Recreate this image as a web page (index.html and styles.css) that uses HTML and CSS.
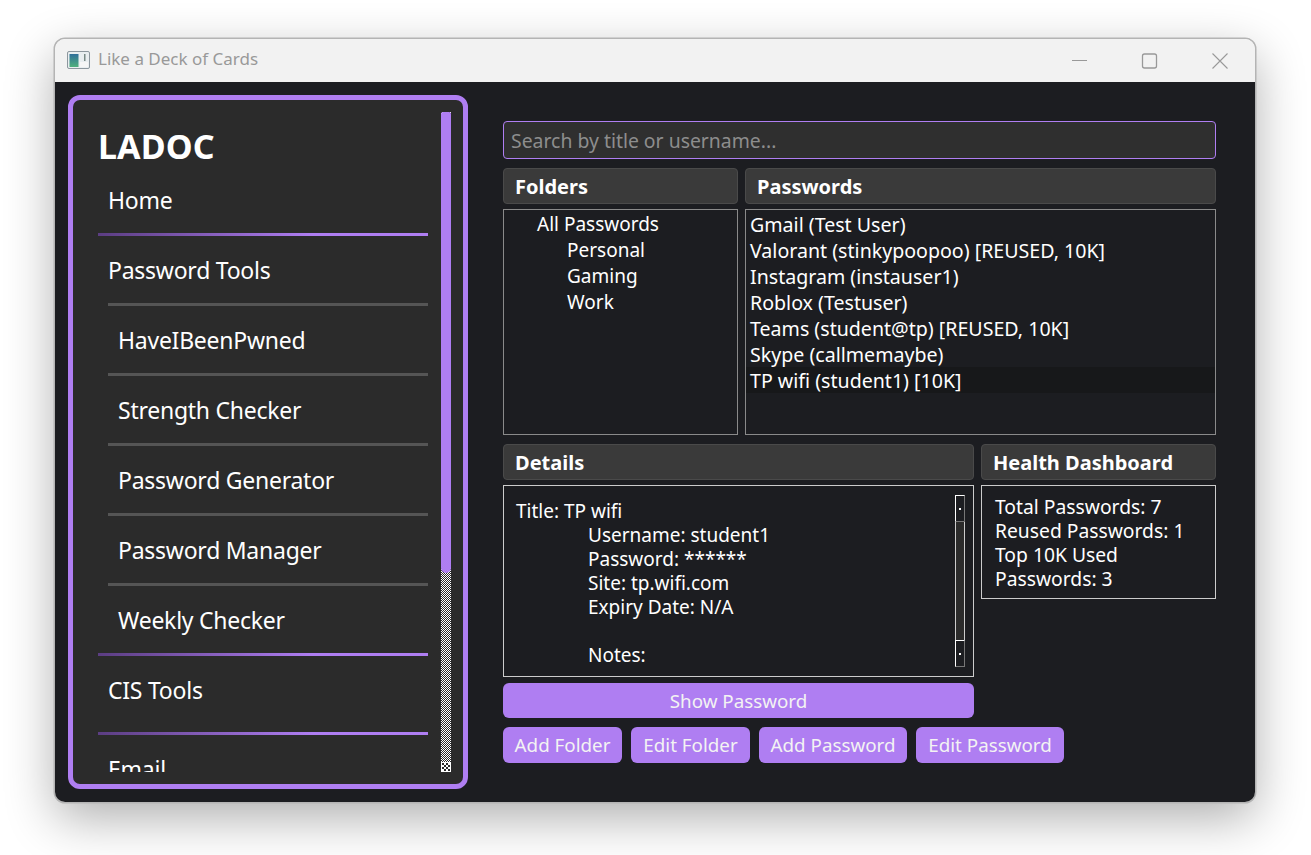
FILE: index.html
```html
<html>
  <head>
    <meta charset="utf-8" />
    <title>Like a Deck of Cards</title>
    <link rel="stylesheet" href="styles.css">
  </head>
  <body>
    <div class="window">
      <div class="titlebar">
        <svg class="app_icon" width="24" height="20" viewBox="0 0 24 20">
          <defs>
            <linearGradient id="icon_fill" x1="0" y1="0" x2="0" y2="1">
              <stop offset="0" stop-color="#2f6f9a" />
              <stop offset="1" stop-color="#4fb07c" />
            </linearGradient>
          </defs>
          <rect x="0.5" y="0.5" width="22" height="17" rx="1.5" fill="#e9eef0" stroke="#8d979e" />
          <rect x="2.5" y="3" width="9" height="13" fill="url(#icon_fill)" />
          <rect x="17" y="3" width="1.5" height="7" fill="#7a8a86" />
          <rect x="13" y="11" width="8" height="5" fill="#f6f6f6" />
        </svg>
        <span class="window_title">Like a Deck of Cards</span>
        <div class="window_controls">
          <svg width="70" height="20" viewBox="0 0 70 20"><path d="M27 9.5h15" stroke="#999" fill="none" /></svg>
          <svg width="70" height="20" viewBox="0 0 70 20"><rect x="27.5" y="3" width="14" height="14" rx="2" stroke="#999" fill="none" stroke-width="1.3" /></svg>
          <svg width="70" height="20" viewBox="0 0 70 20"><path d="M27.5 2.5l15 15M42.5 2.5l-15 15" stroke="#999" fill="none" stroke-width="1.1" /></svg>
        </div>
      </div>
      <div class="content">
        <div class="sidebar">
          <div class="nav">
            <div class="logo">LADOC</div>
            <div class="nav_item main_item">Home</div>
            <div class="nav_item tool_head">Password Tools</div>
            <div class="nav_item tool_item">HaveIBeenPwned</div>
            <div class="nav_item tool_item">Strength Checker</div>
            <div class="nav_item tool_item">Password Generator</div>
            <div class="nav_item tool_item">Password Manager</div>
            <div class="nav_item main_item weekly">Weekly Checker</div>
            <div class="nav_item main_item cis">CIS Tools</div>
            <div class="nav_item main_item">Email</div>
          </div>
          <div class="side_scrollbar">
            <div class="side_thumb"></div>
            <div class="side_arrow"></div>
          </div>
        </div>
        <div class="main">
          <div class="search">Search by title or username...</div>
          <div class="top_grid">
            <div class="section_head">Folders</div>
            <div class="section_head">Passwords</div>
            <div class="list folders">
              <div class="folder_root">All Passwords</div>
              <div class="folder_sub">Personal</div>
              <div class="folder_sub">Gaming</div>
              <div class="folder_sub">Work</div>
            </div>
            <div class="list passwords">
              <div class="pw_row">Gmail (Test User)</div>
              <div class="pw_row">Valorant (stinkypoopoo) [REUSED, 10K]</div>
              <div class="pw_row">Instagram (instauser1)</div>
              <div class="pw_row">Roblox (Testuser)</div>
              <div class="pw_row">Teams (student@tp) [REUSED, 10K]</div>
              <div class="pw_row">Skype (callmemaybe)</div>
              <div class="pw_row selected">TP wifi (student1) [10K]</div>
            </div>
          </div>
          <div class="bottom_grid">
            <div class="section_head">Details</div>
            <div class="section_head">Health Dashboard</div>
            <div class="details">
              <div class="details_text">
                <div>Title: TP wifi</div>
                <div class="indent">Username: student1</div>
                <div class="indent">Password: ******</div>
                <div class="indent">Site: tp.wifi.com</div>
                <div class="indent">Expiry Date: N/A</div>
                <div class="indent blank"></div>
                <div class="indent">Notes:</div>
              </div>
              <div class="detail_scrollbar">
                <div class="arrow_btn"><span class="arrow_dot"></span></div>
                <div class="detail_track"></div>
                <div class="arrow_btn"><span class="arrow_dot"></span></div>
              </div>
            </div>
            <div class="health">
              Total Passwords: 7<br>
              Reused Passwords: 1<br>
              Top 10K Used<br>
              Passwords: 3
            </div>
            <button class="btn show_btn">Show Password</button>
          </div>
          <div class="actions">
            <button class="btn folder_btn">Add Folder</button>
            <button class="btn folder_btn">Edit Folder</button>
            <button class="btn password_btn">Add Password</button>
            <button class="btn password_btn">Edit Password</button>
          </div>
        </div>
      </div>
    </div>
  </body>
</html>
```

FILE: styles.css
```css
body {
  margin: 0;
  background: #fff;
  font-family: "Noto Sans", sans-serif;
  color: #fff;
  overflow: hidden;
}
.window {
  width: 1200px;
  height: 763px;
  margin: 39px 0 0 55px;
  border-radius: 10px;
  box-shadow: 0 0 0 1.5px #b4b4b4, 0 16px 50px rgba(0, 0, 0, 0.32);
  overflow: hidden;
  display: flex;
  flex-direction: column;
}
.titlebar {
  height: 43px;
  background: #f2f2f2;
  display: flex;
  align-items: center;
  flex-shrink: 0;
}
.app_icon {
  margin-left: 12px;
  margin-right: 7px;
}
.window_title {
  font-size: 17px;
  line-height: 20px;
  margin-top: -3px;
  color: #999;
}
.window_controls {
  margin-left: auto;
  display: flex;
}
.window_controls svg {
  display: block;
}
.content {
  flex: 1;
  background: #1c1d21;
  display: flex;
  padding: 13px;
  min-height: 0;
}

/* sidebar */
.sidebar {
  width: 400px;
  box-sizing: border-box;
  border: 5px solid #af7ef2;
  border-radius: 12px;
  background: #2b2b2b;
  padding: 12px 12px 12px 25px;
  display: flex;
}
.nav {
  flex: 1;
  overflow: hidden;
  padding-right: 13px;
}
.logo {
  height: 54px;
  box-sizing: border-box;
  padding-top: 12px;
  font-size: 34px;
  line-height: 44px;
  font-weight: bold;
  letter-spacing: 0.1px;
}
.nav_item {
  height: 70px;
  box-sizing: border-box;
  line-height: 69px;
  font-size: 23px;
  letter-spacing: -0.25px;
  border-bottom: 3px solid;
}
.main_item {
  padding-left: 10px;
  border-image: linear-gradient(to right, #5b3d82, #af7ef2 65%) 1;
}
.tool_head,
.tool_item {
  margin-left: 10px;
  border-bottom-color: #555;
}
.tool_item {
  padding-left: 10px;
}
.weekly {
  padding-left: 20px;
}
.cis {
  height: 79px;
}
.side_scrollbar {
  width: 10px;
  background: repeating-conic-gradient(#fff 0 25%, #2b2b2b 0 50%) 0 0 / 2px 2px;
  display: flex;
  flex-direction: column;
  justify-content: space-between;
}
.side_thumb {
  height: 461px;
  background: #af7ef2;
  border-radius: 2px 2px 5px 5px;
}
.side_arrow {
  height: 10px;
  box-sizing: border-box;
  border: 1px solid #fff;
  background: repeating-conic-gradient(#fff 0 25%, #2b2b2b 0 50%) 0 0 / 4px 4px;
}

/* main panel */
.main {
  margin-left: 35px;
  padding-top: 26px;
  width: 713px;
}
.search {
  height: 38px;
  box-sizing: border-box;
  border: 1px solid #af7ef2;
  border-radius: 4px;
  background: #2f2f2f;
  color: #8d8d8d;
  font-size: 19.4px;
  line-height: 38px;
  padding-left: 7px;
  margin-bottom: 9px;
}
.top_grid {
  display: grid;
  grid-template-columns: 235px 471px;
  grid-template-rows: 36px 226px;
  column-gap: 7px;
  row-gap: 5px;
  margin-bottom: 9px;
}
.bottom_grid {
  display: grid;
  grid-template-columns: 471px 235px;
  grid-template-rows: 36px 192px 35px;
  column-gap: 7px;
  row-gap: 5px;
}
.section_head {
  background: #3a3a3a;
  border: 1px solid #4a4a4a;
  border-radius: 4px;
  font-size: 20px;
  font-weight: bold;
  line-height: 36px;
  height: 34px;
  padding-left: 11px;
}
.list {
  border: 1px solid #8a8a8a;
  font-size: 19.6px;
  box-sizing: border-box;
  padding-top: 1px;
}
.folders {
  font-size: 19px;
  line-height: 26px;
}
.folder_root {
  padding-left: 33px;
}
.folder_sub {
  padding-left: 63px;
}
.pw_row {
  padding-left: 4px;
  height: 26px;
  line-height: 28px;
}
.selected {
  background: #17181a;
}
.details {
  border: 1px solid #ccc;
  display: flex;
  box-sizing: border-box;
  padding: 9px 8px 9px 12px;
  font-size: 19px;
  line-height: 24px;
}
.details_text {
  flex: 1;
  padding-top: 4px;
}
.indent {
  padding-left: 72px;
}
.blank {
  height: 24px;
}
.detail_scrollbar {
  width: 10px;
  margin-left: 1px;
  display: flex;
  flex-direction: column;
}
.arrow_btn {
  height: 27px;
  box-sizing: border-box;
  border: 1px solid #fff;
  border-right-color: #777;
  border-bottom-color: #777;
  display: flex;
  align-items: center;
  justify-content: center;
}
.arrow_dot {
  width: 2px;
  height: 2px;
  background: #fff;
}
.detail_track {
  flex: 1;
  background: #2b2b2b;
  border: 1px solid #ccc;
  border-width: 0 1px;
}
.health {
  border: 1px solid #ccc;
  align-self: start;
  height: 114px;
  box-sizing: border-box;
  font-size: 19.3px;
  line-height: 24px;
  padding: 9px 13px;
}
.btn {
  height: 36px;
  border: none;
  border-radius: 6px;
  background: #af7ef2;
  color: #f3f3f3;
  font-family: inherit;
  font-size: 18.8px;
  padding: 0;
}
.show_btn {
  height: 35px;
  width: 100%;
  margin-top: 1px;
}
.folder_btn {
  width: 119px;
}
.password_btn {
  width: 148px;
}
.actions {
  display: flex;
  gap: 9px;
  margin-top: 10px;
}
```
